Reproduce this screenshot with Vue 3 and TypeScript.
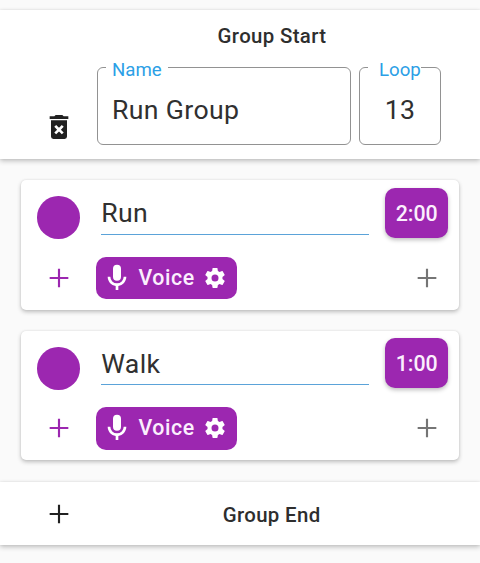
<script setup lang="ts">
import { ref } from 'vue'

interface Step {
  name: string
  time: string
}

const groupName = ref('Run Group')
const loops = ref(13)
const steps = ref<Step[]>([
  { name: 'Run', time: '2:00' },
  { name: 'Walk', time: '1:00' },
])

const plusPath = 'M19 12.8H12.8V19H11.2V12.8H5V11.2H11.2V5H12.8V11.2H19Z'
</script>

<template>
  <main class="screen">
    <section class="band group-start">
      <h2 class="title">Group Start</h2>
      <div class="fields">
        <svg class="icon trash" viewBox="0 0 24 24">
          <path
            d="M6 19.2A1.8 1.8 0 0 0 7.8 21H16.2A1.8 1.8 0 0 0 18 19.2V7H6V19.2M8.46 11.88L9.87 10.47L12 12.59L14.12 10.47L15.53 11.88L13.41 14L15.53 16.12L14.12 17.53L12 15.41L9.88 17.53L8.47 16.12L10.59 14L8.46 11.88M15.5 4L14.5 3H9.5L8.5 4H5V6H19V4H15.5Z"
          />
        </svg>
        <div class="field name-field">
          <span class="label">Name</span>
          <span class="value">{{ groupName }}</span>
        </div>
        <div class="field loop-field">
          <span class="label">Loop</span>
          <span class="value">{{ loops }}</span>
        </div>
      </div>
    </section>

    <article v-for="step in steps" :key="step.name" class="card">
      <div class="top-row">
        <span class="dot"></span>
        <span class="step-name">{{ step.name }}</span>
        <span class="time">{{ step.time }}</span>
      </div>
      <div class="bottom-row">
        <svg class="icon purple" viewBox="0 0 24 24"><path :d="plusPath" /></svg>
        <div class="voice">
          <svg class="icon mic" viewBox="0 0 24 24">
            <path
              d="M12 2A3 3 0 0 1 15 5V11A3 3 0 0 1 12 14A3 3 0 0 1 9 11V5A3 3 0 0 1 12 2M19 11C19 14.53 16.39 17.44 13 17.93V21H11V17.93C7.61 17.44 5 14.53 5 11H7A5 5 0 0 0 12 16A5 5 0 0 0 17 11H19Z"
            />
          </svg>
          <span class="voice-text">Voice</span>
          <svg class="cog" viewBox="0 0 24 24">
            <path
              d="M12 15.5A3.5 3.5 0 0 1 8.5 12A3.5 3.5 0 0 1 12 8.5A3.5 3.5 0 0 1 15.5 12A3.5 3.5 0 0 1 12 15.5M19.43 12.97C19.47 12.65 19.5 12.33 19.5 12C19.5 11.67 19.47 11.34 19.43 11L21.54 9.37C21.73 9.22 21.78 8.95 21.66 8.73L19.66 5.27C19.54 5.05 19.27 4.96 19.05 5.05L16.56 6.05C16.04 5.66 15.5 5.32 14.87 5.07L14.5 2.42C14.46 2.18 14.25 2 14 2H10C9.75 2 9.54 2.18 9.5 2.42L9.13 5.07C8.5 5.32 7.96 5.66 7.44 6.05L4.95 5.05C4.73 4.96 4.46 5.05 4.34 5.27L2.34 8.73C2.21 8.95 2.27 9.22 2.46 9.37L4.57 11C4.53 11.34 4.5 11.67 4.5 12C4.5 12.33 4.53 12.65 4.57 12.97L2.46 14.63C2.27 14.78 2.21 15.05 2.34 15.27L4.34 18.73C4.46 18.95 4.73 19.03 4.95 18.95L7.44 17.94C7.96 18.34 8.5 18.68 9.13 18.93L9.5 21.58C9.54 21.82 9.75 22 10 22H14C14.25 22 14.46 21.82 14.5 21.58L14.87 18.93C15.5 18.67 16.04 18.34 16.56 17.94L19.05 18.95C19.27 19.03 19.54 18.95 19.66 18.73L21.66 15.27C21.78 15.05 21.73 14.78 21.54 14.63L19.43 12.97Z"
            />
          </svg>
        </div>
        <svg class="icon grey" viewBox="0 0 24 24"><path :d="plusPath" /></svg>
      </div>
    </article>

    <section class="band group-end">
      <svg class="icon" viewBox="0 0 24 24"><path :d="plusPath" /></svg>
      <h2 class="title">Group End</h2>
    </section>
  </main>
</template>

<style>
body {
  background: #fafafa;
}
</style>

<style scoped>
.screen {
  box-sizing: border-box;
  width: 480px;
  height: 563px;
  padding-top: 10px;
  overflow: hidden;
  background: #fafafa;
  color: #212121;
  font-family: Roboto, 'Liberation Sans', sans-serif;
}
.band {
  box-sizing: border-box;
  background: #fff;
  box-shadow: 0 2px 5px rgba(0, 0, 0, 0.24), 0 0 2px rgba(0, 0, 0, 0.08);
}
.title {
  margin: 0;
  color: #2e2e2e;
  font-size: 20.4px;
  line-height: 24px;
  font-weight: 500;
  letter-spacing: 0.35px;
  text-align: center;
}
.icon {
  display: block;
  flex: none;
  width: 32px;
  height: 32px;
  fill: currentColor;
}
.group-start {
  height: 149px;
  padding-top: 14px;
  margin-bottom: 21px;
}
.group-start .title {
  padding-left: 64px;
}
.fields {
  display: flex;
  margin-top: 19px;
  padding-left: 42.7px;
}
.trash {
  margin-top: 44px;
}
.field {
  position: relative;
  box-sizing: border-box;
  height: 78px;
  border: 1px solid #929292;
  border-radius: 6px;
  display: flex;
  align-items: center;
  padding-top: 7px;
}
.name-field {
  width: 254px;
  margin-left: 22.3px;
  padding-left: 14px;
}
.loop-field {
  width: 82px;
  margin-left: 8px;
  justify-content: center;
}
.label {
  position: absolute;
  top: -9px;
  left: 8px;
  padding: 0 6px;
  background: #fff;
  color: #2c9fe6;
  font-size: 18.67px;
  line-height: 22px;
}
.loop-field .label {
  left: 8px;
  padding: 0 0 0 11px;
}
.value,
.step-name {
  color: #303030;
  font-size: 26.67px;
  line-height: 32px;
  letter-spacing: 0.35px;
}
.card {
  box-sizing: border-box;
  width: 438px;
  height: 130px;
  margin: 0 0 21px 21px;
  padding: 8px 11px 0 16px;
  border-radius: 5px;
  background: #fff;
  box-shadow: 0 2px 4px rgba(0, 0, 0, 0.24), 0 0 2px rgba(0, 0, 0, 0.1);
}
.card + .card {
  margin-bottom: 22px;
  height: 129px;
  padding-top: 7px;
}
.top-row {
  display: flex;
  align-items: flex-start;
  height: 50px;
}
.dot {
  width: 42.5px;
  height: 42.5px;
  margin-top: 8px;
  margin-left: 0.3px;
  border-radius: 50%;
  background: #9c27b0;
}
.step-name {
  box-sizing: border-box;
  width: 268px;
  height: 47px;
  margin-left: 21.5px;
  padding-top: 9px;
  border-bottom: 1px solid #5ba3d9;
}
.card + .card .dot {
  margin-top: 9px;
}
.card + .card .step-name {
  padding-top: 10px;
}
.time {
  width: 62.7px;
  height: 49.5px;
  margin-left: 16px;
  border-radius: 10px;
  background: #9c27b0;
  box-shadow: 0 2px 4px rgba(0, 0, 0, 0.26);
  color: #fbeffd;
  font-size: 21.33px;
  font-weight: 500;
  line-height: 51px;
  text-align: center;
}
.bottom-row {
  display: flex;
  align-items: center;
  margin-top: 10px;
  padding: 8.5px 5px 0 5.7px;
}
.purple {
  color: #9c27b0;
}
.grey {
  margin-left: auto;
  color: #757575;
}
.voice {
  box-sizing: border-box;
  display: flex;
  align-items: center;
  width: 141px;
  height: 42.5px;
  margin-left: 21.3px;
  padding-left: 5px;
  border-radius: 10px;
  background: #9c27b0;
  color: #fff;
}
.voice-text {
  width: 55px;
  margin-left: 5.5px;
  color: #fbeffd;
  font-size: 21.33px;
  font-weight: 500;
  line-height: 26px;
  letter-spacing: 0.6px;
}
.cog {
  width: 24px;
  height: 24px;
  margin-left: 9.5px;
  fill: currentColor;
}
.card + .card .bottom-row {
  padding-top: 9px;
}
.group-end {
  display: flex;
  align-items: center;
  height: 63px;
  padding-left: 42.7px;
}
.group-end .title {
  margin-left: 148px;
  padding-top: 2px;
}
</style>
